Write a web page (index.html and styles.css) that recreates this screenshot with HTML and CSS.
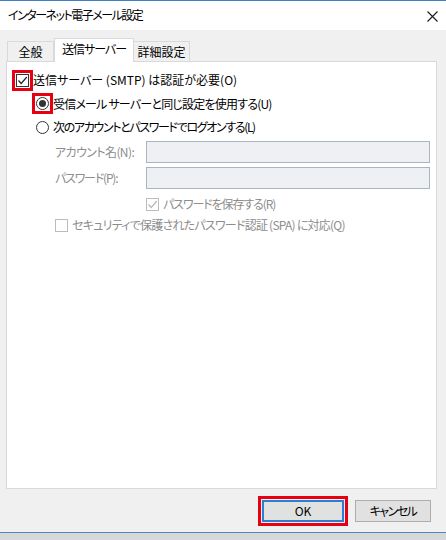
FILE: index.html
```html
<!DOCTYPE html>
<html lang="ja">
<head>
<meta charset="utf-8">
<title>インターネット電子メール設定</title>
<link rel="stylesheet" href="styles.css">
</head>
<body>
<div class="window">
  <div class="titlebar">
    <span class="title">インターネット電子メール設定</span>
    <svg class="close" width="11" height="11" viewBox="0 0 11 11"><path d="M0.5 0.5 L10.5 10.5 M10.5 0.5 L0.5 10.5" stroke="#1a1a1a" stroke-width="1.1" fill="none"/></svg>
  </div>
  <div class="body">
    <div class="tabs">
      <div class="tab first">全般</div>
      <div class="tab active">送信サーバー</div>
      <div class="tab last">詳細設定</div>
    </div>
    <div class="panel">
      <div class="row r1">
        <span class="cb hl"><svg width="11" height="11" viewBox="0 0 11 11"><path d="M1.5 5.5 L4.2 8.5 L9.8 2" stroke="#222" stroke-width="1.2" fill="none"/></svg></span>
        <span class="txt">送信サーバー (SMTP) は認証が必要(O)</span>
      </div>
      <div class="row r2 indent1">
        <span class="radiowrap hl"><span class="radio on"></span></span>
        <span class="txt">受信メール サーバーと同じ設定を使用する(U)</span>
      </div>
      <div class="row r3 indent1">
        <span class="radiowrap"><span class="radio"></span></span>
        <span class="txt">次のアカウントとパスワードでログオンする(L)</span>
      </div>
      <div class="field r4">
        <span class="label l1">アカウント名(N):</span>
        <span class="input"></span>
      </div>
      <div class="field r5">
        <span class="label l2">パスワード(P):</span>
        <span class="input"></span>
      </div>
      <div class="row r6 indent3">
        <span class="cb dis"><svg width="11" height="11" viewBox="0 0 11 11"><path d="M1.5 5.5 L4.2 8.5 L9.8 2" stroke="#b8b8b8" stroke-width="1.2" fill="none"/></svg></span>
        <span class="txt dim">パスワードを保存する(R)</span>
      </div>
      <div class="row r7 indent2">
        <span class="cb dis"></span>
        <span class="txt dim">セキュリティで保護されたパスワード認証 (SPA) に対応(Q)</span>
      </div>
    </div>
    <div class="buttons">
      <div class="btn ok">OK</div>
      <div class="btn cancel">キャンセル</div>
    </div>
  </div>
</div>
</body>
</html>
```
FILE: styles.css
```css
html, body {
  margin: 0;
  padding: 0;
}
body {
  width: 446px;
  height: 540px;
  background: #d8d8d8;
  font-family: "Noto Sans CJK JP", "Noto Sans", sans-serif;
  font-size: 12px;
  font-feature-settings: "palt";
  color: #000;
  overflow: hidden;
}
.window {
  border-top: 1px solid #3d80c2;
  border-bottom: 1px solid #4a86c4;
  background: #f0f0f0;
}
.titlebar {
  height: 29px;
  background: #fff;
  display: flex;
  align-items: center;
  justify-content: space-between;
  padding: 0 8px 0 8px;
}
.title {
  font-size: 12px;
  line-height: 1;
  margin-top: -1px;
  letter-spacing: -1.5px;
}
.close {
  margin-right: 0;
  margin-top: 2px;
}
.body {
  height: 502px;
  padding: 8px 9px 0 6px;
  box-sizing: border-box;
}
.tabs {
  display: flex;
  align-items: flex-end;
  padding-left: 1px;
  height: 23px;
}
.tab {
  height: 20px;
  box-sizing: border-box;
  border: 1px solid #d9d9d9;
  border-bottom: none;
  background: #f0f0f0;
  display: flex;
  align-items: center;
  justify-content: center;
  line-height: 1;
}
.tab.first { width: 47px; }
.tab.last { width: 56px; border-left: none; }
.tab.active {
  width: 80px;
  height: 24px;
  margin-bottom: -1px;
  background: #fff;
  position: relative;
  z-index: 1;
  padding-bottom: 3px;
  letter-spacing: -1px;
}
.panel {
  height: 428px;
  box-sizing: border-box;
  border: 1px solid #d9d9d9;
  background: #fff;
  padding: 6px 0 0 9px;
}
.row {
  display: flex;
  align-items: center;
  gap: 4px;
  line-height: 1;
}
.r1 { height: 24px; }
.r2 { height: 23px; letter-spacing: -0.8px; }
.r3 { height: 24px; letter-spacing: -1.35px; }
.indent1 { padding-left: 20px; gap: 4px; }
.indent2 { padding-left: 39px; }
.indent3 { padding-left: 130px; }
.cb {
  width: 13px;
  height: 13px;
  box-sizing: border-box;
  border: 1px solid #333;
  background: #fff;
  display: flex;
  align-items: center;
  justify-content: center;
  flex: none;
}
.cb.dis { border-color: #bcbcbc; }
.hl {
  outline: 3px solid #e60012;
  outline-offset: 1px;
}
.radiowrap {
  width: 13px;
  height: 13px;
  display: flex;
  flex: none;
}
.radio {
  width: 13px;
  height: 13px;
  box-sizing: border-box;
  border: 1px solid #333;
  border-radius: 50%;
  display: flex;
  align-items: center;
  justify-content: center;
}
.radio.on::before {
  content: "";
  width: 7px;
  height: 7px;
  border-radius: 50%;
  background: #333;
}
.field {
  display: flex;
  align-items: center;
  padding-left: 39px;
  line-height: 1;
}
.r4 { margin-top: 2px; }
.r5 { margin-top: 4px; }
.label {
  width: 91px;
  color: #8d8d8d;
  flex: none;
}
.l1 { letter-spacing: -0.6px; }
.l2 { letter-spacing: -1.2px; }
.input {
  width: 284px;
  height: 22px;
  box-sizing: border-box;
  border: 1px solid #aab5c2;
  background: #eef0f3;
}
.dim { color: #8d8d8d; }
.r6 { height: 16px; margin-top: 7px; letter-spacing: -1.1px; }
.r7 { height: 16px; margin-top: 5px; letter-spacing: -0.75px; }
.buttons {
  display: flex;
  justify-content: flex-end;
  gap: 11px;
  margin-top: 11px;
  padding-right: 6px;
}
.btn {
  height: 22px;
  box-sizing: border-box;
  border: 1px solid #adadad;
  background: #e1e1e1;
  display: flex;
  align-items: center;
  justify-content: center;
  line-height: 1;
}
.btn.ok {
  width: 82px;
  border: 2px solid #2a7fd0;
  outline: 3px solid #e60012;
  outline-offset: 1px;
}
.btn.cancel { width: 76px; letter-spacing: -1.5px; }
```
